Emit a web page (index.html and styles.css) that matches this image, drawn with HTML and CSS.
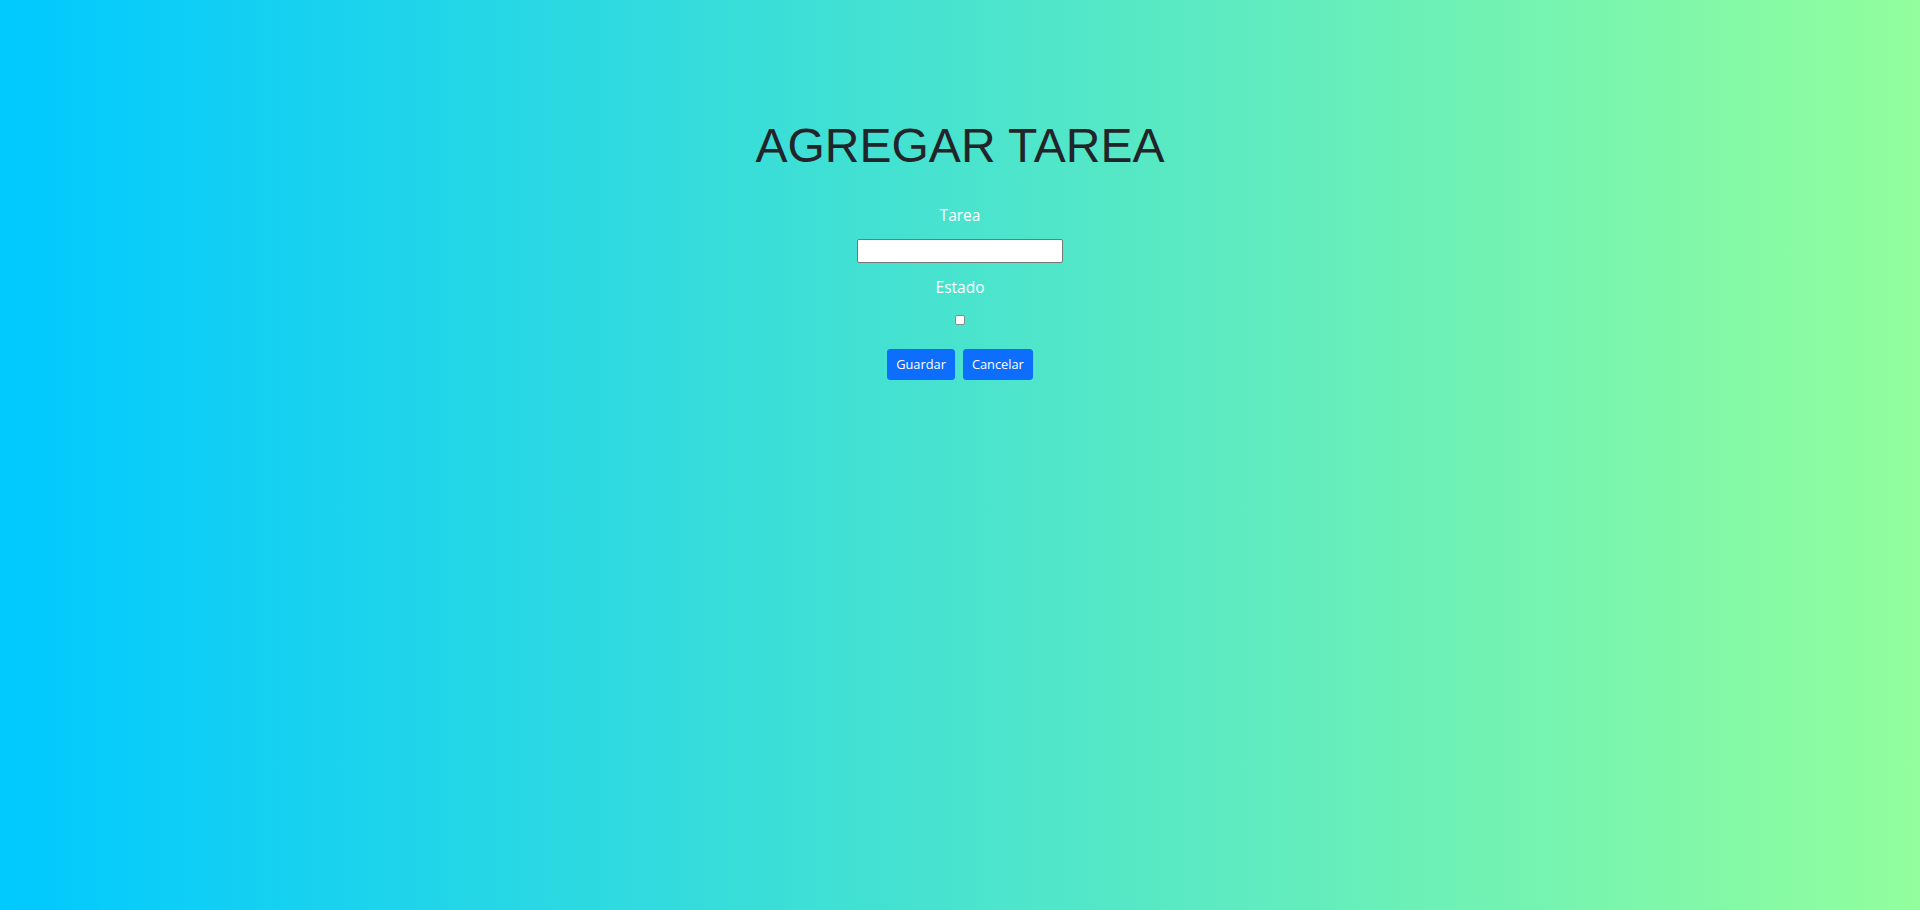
FILE: index.html
```html
<!DOCTYPE html>
<html lang="es">
<head>
<meta charset="utf-8">
<title>Agregar tarea</title>
<link rel="stylesheet" href="styles.css">
</head>
<body>
<main class="page">
  <h1 class="title">AGREGAR TAREA</h1>
  <form class="task-form">
    <label class="field-label" for="tarea">Tarea</label>
    <input class="text-input" id="tarea" type="text">
    <label class="field-label label-estado" for="estado">Estado</label>
    <input class="check" id="estado" type="checkbox">
    <div class="actions">
      <button class="btn" type="button">Guardar</button>
      <button class="btn" type="button">Cancelar</button>
    </div>
  </form>
</main>
</body>
</html>
```

FILE: styles.css
```css
html, body {
  margin: 0;
  padding: 0;
  height: 100%;
}

body {
  background: linear-gradient(to right, #00c9ff 0%, #92fe9d 100%);
  font-family: "Open Sans", "Noto Sans", sans-serif;
  color: #212529;
}

.page {
  display: flex;
  flex-direction: column;
  align-items: center;
  padding-top: 117px;
}

.title {
  margin: 0;
  font-family: "Liberation Sans", Arial, sans-serif;
  font-weight: 400;
  font-size: 48px;
  line-height: 1.2;
  color: #212529;
}

.task-form {
  display: flex;
  flex-direction: column;
  align-items: center;
  margin-top: 28px;
}

.field-label {
  color: #ffffff;
  font-size: 15.5px;
  line-height: 24px;
}

.text-input {
  box-sizing: border-box;
  width: 206px;
  height: 24px;
  margin-top: 12px;
  padding: 1px 2px;
  border: 1px solid #767676;
  border-radius: 2px;
  background: #ffffff;
  font-size: 13px;
}

.label-estado {
  margin-top: 12px;
}

.check {
  appearance: none;
  -webkit-appearance: none;
  box-sizing: border-box;
  width: 10px;
  height: 10px;
  margin: 16px 0 0 0;
  border: 1px solid #8a8a8a;
  border-radius: 2px;
  background: #ffffff;
}

.actions {
  display: flex;
  gap: 8px;
  margin-top: 24px;
}

.btn {
  box-sizing: border-box;
  height: 31px;
  padding: 4px 8px;
  border: 1px solid #0d6efd;
  border-radius: 3px;
  background: #0d6efd;
  color: #ffffff;
  font-family: "Open Sans", "Noto Sans", sans-serif;
  font-size: 12.8px;
  line-height: 21px;
}
```
